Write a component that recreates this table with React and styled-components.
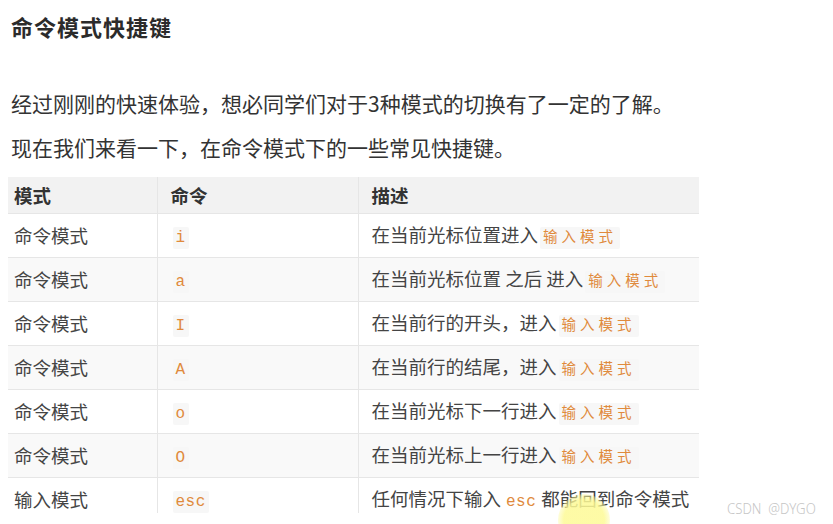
import React from "react";
import styled, { createGlobalStyle } from "styled-components";

const Global = createGlobalStyle`
  html, body { margin: 0; padding: 0; background: #ffffff; }
  body { font-family: "Noto Sans CJK SC", "Noto Sans", sans-serif; color: #333; }
`;

const Page = styled.div`
  position: relative;
  width: 833px;
  height: 524px;
  overflow: hidden;
  display: flex;
  flex-direction: column;
  padding: 11px 0 0 8px;
  box-sizing: border-box;
`;

const Title = styled.h2`
  margin: 0 0 0 3px;
  font-size: 22px;
  line-height: 30px;
  font-weight: 700;
  color: #2b2b2b;
  letter-spacing: 1px;
`;

const Para = styled.p`
  margin: ${(p) => (p.$first ? "40px" : "0")} 0 0 3px;
  font-size: 21px;
  line-height: 44px;
  color: #333;
`;

const TableClip = styled.div`
  margin-top: 8px;
  width: 691px;
  height: 336px;
  overflow: hidden;
`;

const Table = styled.table`
  width: 691px;
  border-collapse: collapse;
  table-layout: fixed;
  font-size: 18.5px;
  color: #444;
`;

const Col = styled.col`
  width: ${(p) => p.$w};
`;

const HeadRow = styled.tr`
  height: 36px;
  background: #f2f2f2;
`;

const Row = styled.tr`
  height: 44px;
  background: ${(p) => (p.$alt ? "#f9f9f9" : "#ffffff")};
`;

const Th = styled.th`
  box-sizing: border-box;
  text-align: left;
  font-weight: 700;
  color: #333;
  padding: 0 0 0 ${(p) => (p.$first ? "6px" : "13px")};
  border-right: ${(p) => (p.$last ? "none" : "1px solid #e6e6e6")};
  border-bottom: 1px solid #e6e6e6;
`;

const Td = styled.td`
  box-sizing: border-box;
  padding: 0 0 0 ${(p) => (p.$first ? "6px" : "13px")};
  border-right: ${(p) => (p.$last ? "none" : "1px solid #e6e6e6")};
  border-bottom: 1px solid #e6e6e6;
  white-space: nowrap;
  vertical-align: middle;
`;

const Code = styled.code`
  display: inline-block;
  font-family: "Liberation Mono", "Noto Sans CJK SC", monospace;
  font-size: ${(p) => (p.$cjk ? "14.5px" : "16px")};
  letter-spacing: ${(p) => (p.$cjk ? "4px" : "0.5px")};
  color: #e08a3c;
  background: ${(p) => (p.$plain ? "transparent" : "#f7f7f7")};
  padding: 1px 3px 1px 3px;
  margin: 0 2px;
  line-height: 20px;
  border-radius: 2px;
`;

const Highlight = styled.div`
  position: absolute;
  left: 558px;
  top: 494px;
  width: 52px;
  height: 52px;
  border-radius: 50%;
  background: radial-gradient(circle, rgba(253, 250, 150, 0.85) 55%, rgba(253, 250, 160, 0.2) 75%, rgba(255, 255, 255, 0) 100%);
`;

const Watermark = styled.div`
  position: absolute;
  left: 727px;
  top: 498px;
  font-family: "Noto Sans", sans-serif;
  font-weight: 300;
  font-size: 15px;
  color: #c6c6c6;
  transform: scaleX(0.88);
  transform-origin: left center;
  white-space: pre;
`;

const IM = () => <Code $cjk>输入模式</Code>;

const rows = [
  ["命令模式", "i", <>在当前光标位置进入<IM /></>],
  ["命令模式", "a", <>在当前光标位置 之后 进入<IM /></>],
  ["命令模式", "I", <>在当前行的开头，进入<IM /></>],
  ["命令模式", "A", <>在当前行的结尾，进入<IM /></>],
  ["命令模式", "o", <>在当前光标下一行进入<IM /></>],
  ["命令模式", "O", <>在当前光标上一行进入<IM /></>],
  ["输入模式", "esc", <>任何情况下输入<Code $plain>esc</Code>都能回到命令模式</>],
];

export default function App() {
  return (
    <>
      <Global />
      <Page>
        <Title>命令模式快捷键</Title>
        <Para $first>经过刚刚的快速体验，想必同学们对于3种模式的切换有了一定的了解。</Para>
        <Para>现在我们来看一下，在命令模式下的一些常见快捷键。</Para>
        <TableClip>
          <Table>
            <colgroup>
              <Col $w="149px" />
              <Col $w="201px" />
              <Col $w="341px" />
            </colgroup>
            <thead>
              <HeadRow>
                <Th $first>模式</Th>
                <Th>命令</Th>
                <Th $last>描述</Th>
              </HeadRow>
            </thead>
            <tbody>
              {rows.map((r, i) => (
                <Row key={i} $alt={i % 2 === 1}>
                  <Td $first>{r[0]}</Td>
                  <Td><Code>{r[1]}</Code></Td>
                  <Td $last>{r[2]}</Td>
                </Row>
              ))}
            </tbody>
          </Table>
        </TableClip>
        <Highlight />
        <Watermark>CSDN  @DYGO</Watermark>
      </Page>
    </>
  );
}
